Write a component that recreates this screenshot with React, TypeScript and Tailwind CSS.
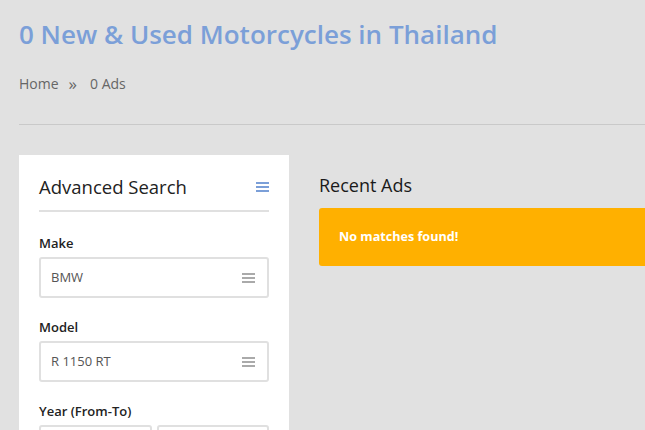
import React from "react";

const MenuLines = ({ className }: { className: string }) => (
  <div className={`flex flex-col gap-[2px] ${className}`}>
    <span className="block h-[2px] w-full bg-current" />
    <span className="block h-[2px] w-full bg-current" />
    <span className="block h-[2px] w-full bg-current" />
  </div>
);

const SelectBox = ({ value }: { value: string }) => (
  <div className="flex h-[41px] items-center justify-between rounded-[3px] border-2 border-[#e0e0e0] bg-white pl-[10px] pr-[12px]">
    <span className="text-[13px] text-[#555]">{value}</span>
    <MenuLines className="w-[13px] text-[#aaa]" />
  </div>
);

export default function App() {
  return (
    <div
      className="h-[430px] w-full overflow-hidden bg-[#e1e1e1]"
      style={{ fontFamily: '"Open Sans", "Liberation Sans", sans-serif' }}
    >
      <div className="w-[1000px] pl-[19px]">
        {/* Page title */}
        <h1 className="pt-[16px] text-[26px] font-semibold leading-[36px] text-[#7b9fd8]">
          0 New &amp; Used Motorcycles in Thailand
        </h1>

        {/* Breadcrumb */}
        <div className="mt-[22px] flex items-center text-[14px] leading-[20px] text-[#666]">
          <span>Home</span>
          <span className="ml-[10px] mr-[13px] text-[17px] leading-[20px]">»</span>
          <span>0 Ads</span>
        </div>

        <hr className="mt-[30px] border-t border-[#c9c9c9]" />

        <div className="mt-[30px] flex gap-[30px]">
          {/* Sidebar */}
          <div className="w-[270px] shrink-0 bg-white px-[20px] pt-[20px] pb-[20px]">
            <div className="flex items-center justify-between border-b-2 border-[#e0e0e0] pb-[11px]">
              <h2 className="text-[18.5px] leading-[24px] text-[#222]">Advanced Search</h2>
              <MenuLines className="w-[13px] text-[#7b9fd8]" />
            </div>

            <div className="mt-[22px]">
              <label className="block text-[13px] font-semibold leading-[18px] text-[#222]">Make</label>
              <div className="mt-[5px]">
                <SelectBox value="BMW" />
              </div>
            </div>

            <div className="mt-[20px]">
              <label className="block text-[13px] font-semibold leading-[18px] text-[#222]">Model</label>
              <div className="mt-[5px]">
                <SelectBox value="R 1150 RT" />
              </div>
            </div>

            <div className="mt-[20px]">
              <label className="block text-[13px] font-semibold leading-[18px] text-[#222]">Year (From-To)</label>
              <div className="mt-[5px] flex gap-[5px]">
                <div className="h-[41px] flex-1 rounded-[3px] border-2 border-[#e0e0e0]" />
                <div className="h-[41px] flex-1 rounded-[3px] border-2 border-[#e0e0e0]" />
              </div>
            </div>
          </div>

          {/* Main column */}
          <div className="flex-1 pt-[18px]">
            <h2 className="text-[18px] leading-[24px] text-[#1a1a1a]">Recent Ads</h2>
            <div className="mt-[11px] flex h-[58px] items-center rounded-[3px] bg-[#ffb000] px-[20px]">
              <span className="text-[12.6px] font-bold text-white">No matches found!</span>
            </div>
          </div>
        </div>
      </div>
    </div>
  );
}
